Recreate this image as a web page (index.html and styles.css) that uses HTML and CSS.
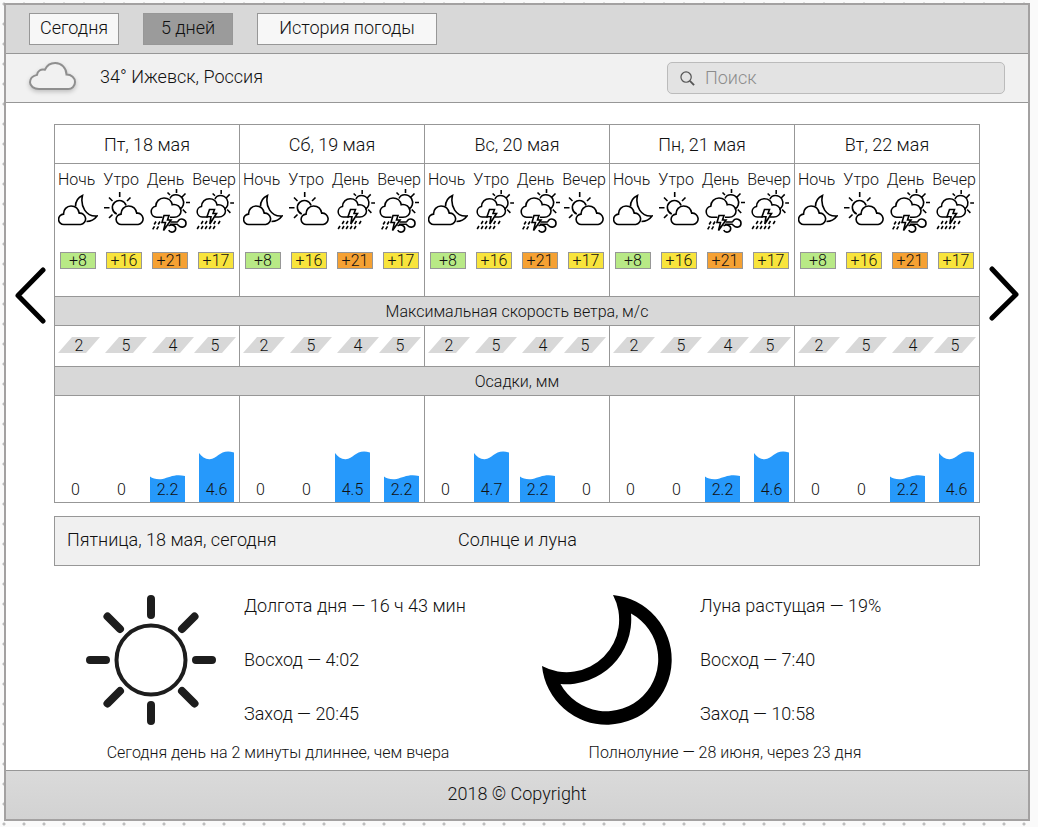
FILE: index.html
```html
<!DOCTYPE html>
<html lang="ru">
<head>
<meta charset="utf-8">
<meta name="viewport" content="width=device-width, initial-scale=1">
<title>Погода на 5 дней</title>
<link rel="stylesheet" href="styles.css">
</head>
<body>
<svg class="sprite" aria-hidden="true">
  <symbol id="moon-cloud" viewBox="0 0 40 46">
    <path d="M6 36.500a5.200 5.200 0 0 1-.4-10.400c-.3-4.500 3.200-8.100 7.400-8.100 4.300 0 7.500 2.900 8.200 7.200a5.700 5.700 0 0 1 1.500 11.300z"/>
    <path d="M17.500 18.500C17.500 13 20 9.500 24.500 7.500C22 18 28 29 39 28C36.500 31.500 33 33.500 28.500 33.500"/>
  </symbol>
  <symbol id="sun-cloud" viewBox="0 0 40 46">
    <path d="M17.500 36.500a5.200 5.200 0 0 1-.4-10.400c-.3-4.500 3.200-8.100 7.400-8.100 4.300 0 7.500 2.900 8.200 7.200a5.700 5.700 0 0 1 1.500 11.300z"/>
    <path d="M12.800 26a7 7 0 1 1 9.300-8.500M15.700 4v5M0 19.700h5.500M5 9.500l3.500 3.500M26.500 9.500L23 13M5 30l3.500-3.500"/>
  </symbol>
  <symbol id="cloud-sun" viewBox="0 0 40 46">
    <path d="M12.500 29.300H6.500a5.600 5.600 0 0 1-.7-11.100c0-4.700 3.700-8.200 8.200-8.200 4.300 0 7.500 2.800 8.200 6.700 4.600-1 8.800 2.200 8.800 6.200 0 3.700-3 6.400-7 6.400H20"/>
    <path d="M20 10.500C22 5.500 29 5.500 32.500 10.500c2.500 4.500.5 9-2.800 10.700M26.500 1v4M35.500 5.500L32 9M36 14.500h4M32.800 21.500l3.400 3.500M17.500 4.500L20 7"/>
  </symbol>
  <symbol id="storm-wind" viewBox="0 0 40 46">
    <use href="#cloud-sun" width="40" height="46"/>
    <path d="M14 27.500H19L17.500 32H21L13.500 42.500L15.500 34.500H12z"/>
    <path d="M20.500 34h6.500c1-.2 1-.7 1.500-1.500 1.800-2.600 7.500-1.600 7.500 2.700 0 4.200-4.800 5-7.500 2.300l-1.300-1.300H20M18.500 38c2.500-2 7.200-.8 7.200 2.600 0 3.800-5.200 4.800-7 1.600"/>
    <path d="M6 33.500l-1.800 3M10 33.500l-1.800 3M4.500 38.300l-1.800 3M8.500 38.300l-1.800 3"/>
  </symbol>
  <symbol id="storm-rain" viewBox="0 0 40 46">
    <use href="#cloud-sun" x="2" y="1" width="38" height="44"/>
    <path d="M15.500 21.500H20.500L19 25.500H22.500L15.800 36L17 28.700H13z"/>
    <path d="M9 33l-1.800 3M13 33l-1.800 3M21.500 33l-1.800 3M26 33l-1.800 3M5 38l-1.800 3M9 38l-1.800 3M13 38l-1.800 3M17 38l-1.800 3M21 38l-1.800 3"/>
  </symbol>
  <symbol id="wave-high" viewBox="0 0 36 10" preserveAspectRatio="none">
    <path d="M0 2C3 6 6.500 8.500 11 8.300C20 7.500 22-2.500 36 1.500V10H0z"/>
  </symbol>
  <symbol id="wave-low" viewBox="0 0 36 10" preserveAspectRatio="none">
    <path d="M0 1.500C3 4 8 4.700 13 4C20 2.500 25-1.200 36 1V10H0z"/>
  </symbol>
</svg>

<div class="page">
  <nav class="nav" aria-label="Период">
    <button class="tab" type="button">Сегодня</button>
    <button class="tab tab-active" type="button" aria-current="page">5 дней</button>
    <button class="tab tab-wide" type="button">История погоды</button>
  </nav>

  <header class="location">
    <svg class="location-icon" viewBox="0 0 52 34" aria-hidden="true"><path d="M11 28h28.500a6.800 6.800 0 0 0 7.500-7c0-4-3.500-7.400-8.500-7.400 0-6.500-5-11.600-11.300-11.600-4.700 0-8.500 2.700-10.200 6.700-4.300-1-7.500 1.300-8 5.200C4.500 15 2 17.800 2 21.300 2 25.300 6 28 11 28z"/></svg>
    <span class="place">34° Ижевск, Россия</span>
    <label class="search">
      <svg class="search-icon" viewBox="0 0 16 16" aria-hidden="true"><circle cx="6.500" cy="6.500" r="5.500"/><path d="M10.500 10.500L15 15" stroke-width="2"/></svg>
      <input class="search-input" type="search" placeholder="Поиск" aria-label="Поиск">
    </label>
  </header>

  <main>
    <div class="forecast">
      <button class="arrow" type="button" aria-label="Предыдущие дни"><svg viewBox="0 0 32 58"><path d="M29 4L4 29.500L29 55"/></svg></button>
      <table class="days">
        <thead>
          <tr><th scope="col">Пт, 18 мая</th><th scope="col">Сб, 19 мая</th><th scope="col">Вс, 20 мая</th><th scope="col">Пн, 21 мая</th><th scope="col">Вт, 22 мая</th></tr>
        </thead>
        <tbody>
          <tr class="weather">
            <td>
              <div class="periods"><span>Ночь</span><span>Утро</span><span>День</span><span>Вечер</span></div>
              <div class="icons"><svg><use href="#moon-cloud"/></svg><svg><use href="#sun-cloud"/></svg><svg><use href="#storm-wind"/></svg><svg><use href="#storm-rain"/></svg></div>
              <div class="temps"><span class="cool">+8</span><span class="warm">+16</span><span class="hot">+21</span><span class="warm">+17</span></div>
            </td>
            <td>
              <div class="periods"><span>Ночь</span><span>Утро</span><span>День</span><span>Вечер</span></div>
              <div class="icons"><svg><use href="#moon-cloud"/></svg><svg><use href="#sun-cloud"/></svg><svg><use href="#storm-rain"/></svg><svg><use href="#storm-wind"/></svg></div>
              <div class="temps"><span class="cool">+8</span><span class="warm">+16</span><span class="hot">+21</span><span class="warm">+17</span></div>
            </td>
            <td>
              <div class="periods"><span>Ночь</span><span>Утро</span><span>День</span><span>Вечер</span></div>
              <div class="icons"><svg><use href="#moon-cloud"/></svg><svg><use href="#storm-rain"/></svg><svg><use href="#storm-wind"/></svg><svg><use href="#sun-cloud"/></svg></div>
              <div class="temps"><span class="cool">+8</span><span class="warm">+16</span><span class="hot">+21</span><span class="warm">+17</span></div>
            </td>
            <td>
              <div class="periods"><span>Ночь</span><span>Утро</span><span>День</span><span>Вечер</span></div>
              <div class="icons"><svg><use href="#moon-cloud"/></svg><svg><use href="#sun-cloud"/></svg><svg><use href="#storm-wind"/></svg><svg><use href="#storm-rain"/></svg></div>
              <div class="temps"><span class="cool">+8</span><span class="warm">+16</span><span class="hot">+21</span><span class="warm">+17</span></div>
            </td>
            <td>
              <div class="periods"><span>Ночь</span><span>Утро</span><span>День</span><span>Вечер</span></div>
              <div class="icons"><svg><use href="#moon-cloud"/></svg><svg><use href="#sun-cloud"/></svg><svg><use href="#storm-wind"/></svg><svg><use href="#storm-rain"/></svg></div>
              <div class="temps"><span class="cool">+8</span><span class="warm">+16</span><span class="hot">+21</span><span class="warm">+17</span></div>
            </td>
          </tr>
          <tr class="band"><th colspan="5">Максимальная скорость ветра, м/с</th></tr>
          <tr class="wind">
            <td><div class="speeds"><span>2</span><span>5</span><span>4</span><span>5</span></div></td>
            <td><div class="speeds"><span>2</span><span>5</span><span>4</span><span>5</span></div></td>
            <td><div class="speeds"><span>2</span><span>5</span><span>4</span><span>5</span></div></td>
            <td><div class="speeds"><span>2</span><span>5</span><span>4</span><span>5</span></div></td>
            <td><div class="speeds"><span>2</span><span>5</span><span>4</span><span>5</span></div></td>
          </tr>
          <tr class="band"><th colspan="5">Осадки, мм</th></tr>
          <tr class="rain">
            <td><div class="bars"><span>0</span><span>0</span><span class="bar low"><svg><use href="#wave-low"/></svg>2.2</span><span class="bar high"><svg><use href="#wave-high"/></svg>4.6</span></div></td>
            <td><div class="bars"><span>0</span><span>0</span><span class="bar high"><svg><use href="#wave-high"/></svg>4.5</span><span class="bar low"><svg><use href="#wave-low"/></svg>2.2</span></div></td>
            <td><div class="bars"><span>0</span><span class="bar high"><svg><use href="#wave-high"/></svg>4.7</span><span class="bar low"><svg><use href="#wave-low"/></svg>2.2</span><span>0</span></div></td>
            <td><div class="bars"><span>0</span><span>0</span><span class="bar low"><svg><use href="#wave-low"/></svg>2.2</span><span class="bar high"><svg><use href="#wave-high"/></svg>4.6</span></div></td>
            <td><div class="bars"><span>0</span><span>0</span><span class="bar low"><svg><use href="#wave-low"/></svg>2.2</span><span class="bar high"><svg><use href="#wave-high"/></svg>4.6</span></div></td>
          </tr>
        </tbody>
      </table>
      <button class="arrow" type="button" aria-label="Следующие дни"><svg viewBox="0 0 32 58"><path d="M4 3L28 28.500L4 52"/></svg></button>
    </div>

    <div class="today">
      <span>Пятница, 18 мая, сегодня</span>
      <h2>Солнце и луна</h2>
    </div>

    <div class="astro">
      <section class="body-card">
        <div class="body-info">
          <svg class="sun" viewBox="0 0 130 130" aria-hidden="true"><circle cx="65" cy="65" r="34.500"/><path d="M65 4v16M65 110v16M4 65h16M110 65h16M21.500 21.500L34 34M96 96l12.500 12.500M108.500 21.500L96 34M34 96l-12.500 12.500"/></svg>
          <ul><li>Долгота дня — 16 ч 43 мин</li><li>Восход — 4:02</li><li>Заход — 20:45</li></ul>
        </div>
        <p>Сегодня день на 2 минуты длиннее, чем вчера</p>
      </section>
      <section class="body-card">
        <div class="body-info">
          <svg class="moon" viewBox="0 0 130 130" aria-hidden="true"><path fill-rule="evenodd" d="M71 0A65 65 0 1 1 0 71A52.500 52.500 0 0 0 71 0zM89 18.500A52 52 0 1 1 18.500 89A65 65 0 0 0 89 18.500z"/></svg>
          <ul><li>Луна растущая — 19%</li><li>Восход — 7:40</li><li>Заход — 10:58</li></ul>
        </div>
        <p>Полнолуние — 28 июня, через 23 дня</p>
      </section>
    </div>
  </main>

  <footer class="footer">2018 © Copyright</footer>
</div>
</body>
</html>
```

FILE: styles.css
```css
* {
  box-sizing: border-box;
}

body {
  margin: 0;
  padding: 3px 8px 5px 4px;
  background-color: #fafafa;
  background-image: radial-gradient(circle at 4px 4px, #bdbdbd 1px, transparent 2px);
  background-size: 20px 20px;
  color: #111;
  font-family: Roboto, "Noto Sans", sans-serif;
  font-size: 18px;
  font-weight: 300;
  line-height: 24px;
}

button,
input {
  font: inherit;
  color: inherit;
}

.sprite {
  position: absolute;
  width: 0;
  height: 0;
}

.page {
  border: 2px solid #a3a1a1;
  background: #fff;
}

.nav {
  display: flex;
  gap: 24px;
  padding: 8px 23px;
  border-bottom: 1px solid #979797;
  background: #d8d8d8;
}

.tab {
  width: 90px;
  height: 32px;
  padding: 0 0 2px;
  border: 1px solid #979797;
  background: #f7f7f7;
}

.tab-active {
  background: #9b9b9b;
}

.tab-wide {
  width: 180px;
}

.location {
  display: flex;
  align-items: center;
  height: 49px;
  padding: 0 23px 0 22px;
  border-bottom: 1px solid #979797;
  background: #f1f1f1;
}

.location-icon {
  width: 52px;
  height: 34px;
  margin-right: 20px;
  fill: #f1f1f1;
  stroke: #8f8f8f;
  stroke-width: 2;
  filter: drop-shadow(0 2px 2px #0003);
}

.place {
  padding-bottom: 2px;
}

.search {
  display: flex;
  align-items: center;
  width: 338px;
  height: 32px;
  margin-left: auto;
  padding: 0 12px;
  gap: 10px;
  border: 1px solid #bbb;
  border-radius: 5px;
  background: #e3e3e3;
}

.search-icon {
  flex: none;
  width: 15px;
  height: 15px;
  fill: none;
  stroke: #555;
  stroke-width: 1.3;
}

.search-input {
  flex: 1;
  min-width: 0;
  padding: 0;
  border: 0;
  outline: 0;
  background: none;
}

.search-input::placeholder {
  color: #8c8c8c;
}

.forecast {
  display: flex;
  padding-top: 21px;
}

.arrow {
  display: flex;
  flex: none;
  align-items: center;
  justify-content: center;
  width: 48px;
  padding: 0 0 38px;
  border: 0;
  background: none;
}

.arrow svg {
  width: 32px;
  height: 58px;
  fill: none;
  stroke: #000;
  stroke-width: 5;
  stroke-linecap: round;
  stroke-linejoin: round;
}

.days {
  flex: 1;
  table-layout: fixed;
  border-collapse: collapse;
  font-size: 16px;
  line-height: 20px;
}

.days th,
.days td {
  padding: 0;
  border: 1px solid #979797;
  font-weight: 300;
  vertical-align: top;
}

.days thead th {
  height: 39px;
  padding-top: 2px;
  font-size: 18px;
  vertical-align: middle;
}

.weather td {
  height: 133px;
}

.periods {
  display: flex;
  justify-content: space-between;
  padding: 6px 3px 0;
}

.icons {
  display: grid;
  grid-template-columns: 46px 46px 44px 40px;
  margin: -2px 0 0 3px;
}

.icons svg {
  width: 40px;
  height: 46px;
}

.sprite symbol {
  fill: none;
  stroke: #000;
  stroke-width: 1.6;
}

#wave-high,
#wave-low {
  fill: #2699fb;
  stroke: none;
}

.temps {
  display: flex;
  justify-content: center;
  gap: 10px;
  margin-top: 18px;
}

.temps span {
  width: 36px;
  border: 1px solid #979797;
  line-height: 15px;
  text-align: center;
}

.cool {
  background: #b8e986;
}

.warm {
  background: #f8e43c;
}

.hot {
  background: #f5a133;
}

.days .band th {
  height: 29px;
  padding-top: 2px;
  background: #d8d8d8;
  vertical-align: middle;
}

.wind td {
  height: 41px;
}

.speeds {
  display: grid;
  grid-template-columns: 47px 47px 42px 42px;
  padding: 11px 0 0 3px;
}

.speeds span {
  width: 42px;
  height: 16px;
  background: #d8d8d8;
  clip-path: polygon(14px 0, 100% 0, 28px 100%, 0 100%);
  line-height: 18px;
  text-align: center;
}

.rain td {
  height: 107px;
  vertical-align: bottom;
}

.bars {
  display: grid;
  grid-template-columns: 46px 46px 49px 36px;
  align-items: end;
  padding-left: 3px;
}

.bars span {
  width: 35px;
  padding-bottom: 2px;
  text-align: center;
}

.bar {
  display: flex;
  flex-direction: column;
  justify-content: space-between;
  background: linear-gradient(#2699fb, #2699fb) 0 9px no-repeat;
}

.bar svg {
  width: 35px;
  height: 10px;
}

.low {
  height: 27px;
}

.low svg {
  margin-bottom: -6px;
}

.high {
  height: 51px;
}

.today {
  display: grid;
  grid-template-columns: 391px 1fr;
  height: 50px;
  margin: 13px 48px 0;
  padding: 11px 12px;
  border: 1px solid #979797;
  background: #f0f0f0;
}

.today h2 {
  margin: 0;
  font: inherit;
}

.astro {
  display: grid;
  grid-template-columns: 456px 1fr;
  padding: 29px 48px 5px 80px;
}

.body-info {
  display: flex;
  gap: 28px;
}

.body-info svg {
  flex: none;
  width: 130px;
  height: 130px;
}

.sun {
  fill: none;
  stroke: #1d1d1d;
  stroke-width: 4;
}

.sun path {
  stroke-width: 8;
  stroke-linecap: round;
}

.body-info ul {
  display: flex;
  flex-direction: column;
  gap: 30px;
  margin: -1px 0 0;
  padding: 0;
  list-style: none;
}

.body-card p {
  width: 384px;
  margin: 15px 0 0;
  font-size: 16px;
  text-align: center;
}

.body-card + .body-card p {
  width: 366px;
}

.footer {
  height: 49px;
  padding-top: 11px;
  border-top: 1px solid #979797;
  background: linear-gradient(#dadada, #d2d2d2);
  text-align: center;
}
```
